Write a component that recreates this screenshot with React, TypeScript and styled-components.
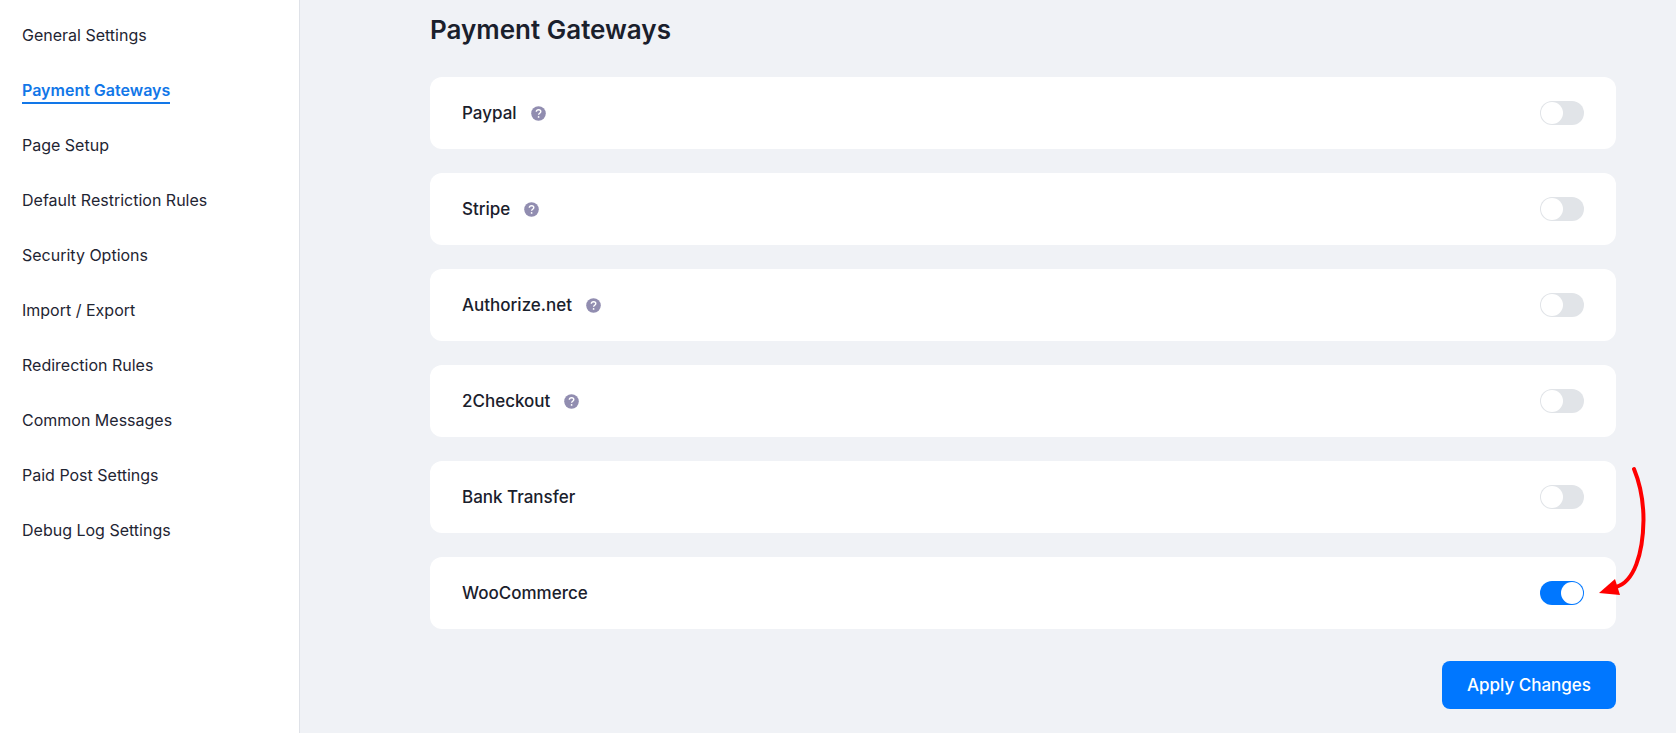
import React, { useState } from "react";
import styled, { createGlobalStyle } from "styled-components";

const GlobalStyle = createGlobalStyle`
  *, *::before, *::after { box-sizing: border-box; }
  body {
    margin: 0;
    background: #f0f2f6;
    color: #1a202c;
    font-family: Inter, "Liberation Sans", sans-serif;
  }
`;

const Page = styled.div`
  display: flex;
  min-height: 100vh;
`;

const Sidebar = styled.nav`
  flex: 0 0 300px;
  padding: 24px 22px;
  background: #fff;
  border-right: 1px solid #dfe2e8;
`;

const NavList = styled.ul`
  display: flex;
  flex-direction: column;
  align-items: flex-start;
  gap: 30px;
  margin: 0;
  padding: 0;
  list-style: none;
`;

const NavLink = styled.a<{ $active: boolean }>`
  display: block;
  border-bottom: 2px solid ${(p) => (p.$active ? "#1277e8" : "transparent")};
  color: ${(p) => (p.$active ? "#1277e8" : "#1f2533")};
  font-size: 16px;
  font-weight: ${(p) => (p.$active ? 600 : 400)};
  line-height: 23px;
  text-decoration: none;
  white-space: nowrap;
`;

const Main = styled.main`
  flex: 1;
  min-width: 0;
  padding: 12px 60px 23px 130px;
`;

const Title = styled.h1`
  margin: 0 0 29px;
  font-size: 26px;
  font-weight: 600;
  line-height: 36px;
`;

const Form = styled.form`
  display: flex;
  flex-direction: column;
  gap: 32px;
`;

const GatewayList = styled.div`
  display: flex;
  flex-direction: column;
  gap: 24px;
`;

const Card = styled.div`
  position: relative;
  display: flex;
  align-items: center;
  padding: 24px 32px;
  border-radius: 12px;
  background: #fff;
`;

const CardLabel = styled.label`
  font-size: 17px;
  font-weight: 500;
  line-height: 24px;
`;

const HelpButton = styled.button`
  display: flex;
  margin-left: 14px;
  padding: 0;
  border: 0;
  background: none;
  cursor: pointer;
`;

const Switch = styled.input`
  appearance: none;
  display: flex;
  width: 44px;
  height: 24px;
  margin: 0 0 0 auto;
  padding: 1px;
  border-radius: 12px;
  background: #e1e4e8;
  cursor: pointer;

  &::before {
    content: "";
    width: 22px;
    height: 22px;
    border-radius: 50%;
    background: #fff;
  }

  &:checked {
    justify-content: flex-end;
    background: #0077ff;
  }
`;

const PointerArrow = styled.svg`
  position: absolute;
  top: -91px;
  right: -32px;
  pointer-events: none;
`;

const ApplyButton = styled.button`
  align-self: flex-end;
  padding: 12px 25px;
  border: 0;
  border-radius: 8px;
  background: #0077ff;
  color: #fff;
  font-family: inherit;
  font-size: 17px;
  font-weight: 500;
  line-height: 24px;
  cursor: pointer;
`;

const navItems = [
  "General Settings",
  "Payment Gateways",
  "Page Setup",
  "Default Restriction Rules",
  "Security Options",
  "Import / Export",
  "Redirection Rules",
  "Common Messages",
  "Paid Post Settings",
  "Debug Log Settings",
];

const gateways = [
  { id: "paypal", label: "Paypal", help: true },
  { id: "stripe", label: "Stripe", help: true },
  { id: "authorize", label: "Authorize.net", help: true },
  { id: "2checkout", label: "2Checkout", help: true },
  { id: "bank", label: "Bank Transfer", help: false },
  { id: "woocommerce", label: "WooCommerce", help: false },
];

const HelpIcon = () => (
  <svg width="15" height="15" viewBox="0 0 15 15" fill="none" aria-hidden="true">
    <circle cx="7.5" cy="7.5" r="7.3" fill="#918db0" />
    <path
      d="M5.3 5.7C5.4 4.4 6.3 3.7 7.6 3.7C8.9 3.7 9.8 4.4 9.8 5.5C9.8 6.3 9.4 6.7 8.7 7.2C8 7.7 7.6 8 7.6 8.8"
      stroke="#fff"
      strokeWidth="1.4"
    />
    <circle cx="7.6" cy="10.9" r="0.9" fill="#fff" />
  </svg>
);

const Arrow = () => (
  <PointerArrow width="52" height="134" viewBox="0 0 52 134" fill="none" aria-hidden="true">
    <path
      d="M38 3C45 20 47.5 36 47.5 54C47 88 38 116 20 121"
      stroke="#ff0000"
      strokeWidth="4"
      strokeLinecap="round"
    />
    <path d="M3 127L19 113L24 129Z" fill="#ff0000" />
  </PointerArrow>
);

export default function App() {
  const [enabled, setEnabled] = useState<Record<string, boolean>>({ woocommerce: true });

  return (
    <>
      <GlobalStyle />
      <Page>
        <Sidebar aria-label="Settings">
          <NavList>
            {navItems.map((item) => {
              const active = item === "Payment Gateways";
              return (
                <li key={item}>
                  <NavLink href="#" $active={active} aria-current={active ? "page" : undefined}>
                    {item}
                  </NavLink>
                </li>
              );
            })}
          </NavList>
        </Sidebar>
        <Main>
          <Title>Payment Gateways</Title>
          <Form onSubmit={(e) => e.preventDefault()}>
            <GatewayList>
              {gateways.map(({ id, label, help }) => (
                <Card key={id}>
                  <CardLabel htmlFor={id}>{label}</CardLabel>
                  {help && (
                    <HelpButton type="button" aria-label={`About ${label}`}>
                      <HelpIcon />
                    </HelpButton>
                  )}
                  <Switch
                    id={id}
                    type="checkbox"
                    role="switch"
                    checked={!!enabled[id]}
                    onChange={(e) => setEnabled({ ...enabled, [id]: e.target.checked })}
                  />
                  {id === "woocommerce" && <Arrow />}
                </Card>
              ))}
            </GatewayList>
            <ApplyButton type="submit">Apply Changes</ApplyButton>
          </Form>
        </Main>
      </Page>
    </>
  );
}
